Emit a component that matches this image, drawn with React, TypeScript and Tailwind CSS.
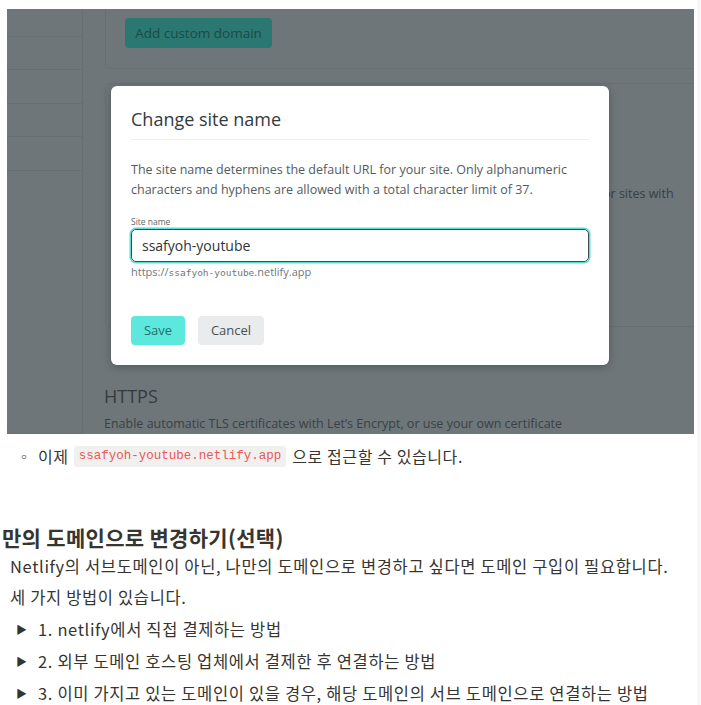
const kr = "font-['Noto_Sans_CJK_KR','Noto_Sans',sans-serif]";
const ui = "font-['Open_Sans','Noto_Sans',sans-serif]";

const sidebarRows = [0, 1, 2, 3, 4, 5];

const methods = [
  "1. netlify에서 직접 결제하는 방법",
  "2. 외부 도메인 호스팅 업체에서 결제한 후 연결하는 방법",
  "3. 이미 가지고 있는 도메인이 있을 경우, 해당 도메인의 서브 도메인으로 연결하는 방법",
];

function ScreenShot() {
  return (
    <div className={`relative ml-[7px] mt-[9px] h-[425px] w-[687px] shrink-0 overflow-hidden bg-[#6e767a] ${ui}`}>
      <div className="flex gap-[22px]">
        {/* sidebar behind the overlay */}
        <div className="-mt-[6px] flex w-[76px] flex-col rounded-b-[4px] border-r border-b border-[#667074]">
          {sidebarRows.map((i) => (
            <div key={i} className="h-[33.6px] border-b border-[#667074] last:border-b-0" />
          ))}
        </div>

        <div className="flex flex-1 flex-col">
          <div className="-mt-[10px] -mr-[10px] flex h-[70px] items-end rounded-b-[6px] border border-[#667074] pb-[20px] pl-[19px]">
            <div className="flex h-[30px] w-[147px] items-center justify-center rounded-[4px] bg-[#2b7872] text-[13.5px] text-[#1c4a46]">
              Add custom domain
            </div>
          </div>
          <div className="-mr-[10px] mt-[14px] flex h-[244px] flex-col justify-center rounded-[6px] border border-[#667074] pl-[497px] pb-[22px]">
            <p className="text-[12.5px] text-[#383f42]">or sites with</p>
          </div>
          <p className="mt-[58px] -ml-[1px] text-[18px] leading-[22px] text-[#343b3e]">HTTPS</p>
          <p className="mt-[8px] -ml-[1px] text-[12.5px] text-[#3a4144]">
            Enable automatic TLS certificates with Let’s Encrypt, or use your own certificate
          </p>
        </div>
      </div>

      {/* modal on top of the dimmed page */}
      <div className="absolute left-[104px] top-[77px] flex h-[279px] w-[498px] flex-col rounded-[6px] bg-white px-[20px] shadow-[0_2px_8px_rgba(0,0,0,0.25)]">
        <p className="mt-[21px] text-[18px] leading-[24px] text-[#333a3d]">Change site name</p>
        <div className="mt-[8px] h-px bg-[#eef0f1]" />
        <p className="mt-[20px] text-[12.5px] leading-[20px] text-[#545b5e]">
          The site name determines the default URL for your site. Only alphanumeric
          <br />
          characters and hyphens are allowed with a total character limit of 37.
        </p>
        <p className="mt-[17px] text-[8.5px] leading-[10px] text-[#5e6568]">Site name</p>
        <div className="mt-[2px] flex h-[33px] items-center rounded-[5px] border border-[#414a4e] pl-[10px] text-[14px] text-[#2f3538] shadow-[0_0_0_1.5px_#59ddd3]">
          ssafyoh-youtube
        </div>
        <p className="mt-[2px] text-[11px] leading-[16px] text-[#70777a]">
          https://<span className="font-['DejaVu_Sans_Mono',monospace] text-[9.5px]">ssafyoh-youtube</span>.netlify.app
        </p>
        <div className="mt-[35px] flex gap-[13px]">
          <div className="flex h-[29px] w-[54px] items-center justify-center rounded-[4px] bg-[#5ce8dd] text-[13px] text-[#21706a]">
            Save
          </div>
          <div className="flex h-[29px] w-[66px] items-center justify-center rounded-[4px] bg-[#e9ebed] text-[13px] text-[#4a5154]">
            Cancel
          </div>
        </div>
      </div>
    </div>
  );
}

export default function App() {
  return (
    <div className={`flex h-[705px] w-[701px] overflow-hidden bg-white text-[#37352f] ${kr}`}>
      <div className="flex w-[697px] flex-col">
        <ScreenShot />

        <div className="mt-[10px] flex items-center pl-[17px] text-[16px] leading-[24px] tracking-[0.6px]">
          <span className="w-[21px] text-[14px] text-[#37352f]">◦</span>
          <span>이제</span>
          <code className="ml-[5px] mr-[6px] rounded-[3px] bg-[#f0f0ef] px-[5px] font-['Liberation_Mono',monospace] text-[12.5px] leading-[21px] tracking-normal text-[#eb5757]">
            ssafyoh-youtube.netlify.app
          </code>
          <span>으로 접근할 수 있습니다.</span>
        </div>

        <h3 className="mt-[54px] pl-[2px] text-[21px] font-bold leading-[30px] tracking-[0.3px]">
          만의 도메인으로 변경하기(선택)
        </h3>
        <p className="mt-[-1px] pl-[10px] text-[16.5px] leading-[30px] tracking-[0.65px]">
          Netlify의 서브도메인이 아닌, 나만의 도메인으로 변경하고 싶다면 도메인 구입이 필요합니다.
        </p>
        <p className="mt-[1px] pl-[10px] text-[16.5px] leading-[30px] tracking-[0.65px]">세 가지 방법이 있습니다.</p>
        <ul className="mt-[2px] flex flex-col gap-[2px]">
          {methods.map((m) => (
            <li key={m} className="flex items-center pl-[16px] text-[16.5px] leading-[30px] tracking-[0.65px]">
              <span className="w-[22px] text-[11px]">▶</span>
              <span>{m}</span>
            </li>
          ))}
        </ul>
      </div>
      <div className="w-[4px] bg-[#f7f7f7]" />
    </div>
  );
}
